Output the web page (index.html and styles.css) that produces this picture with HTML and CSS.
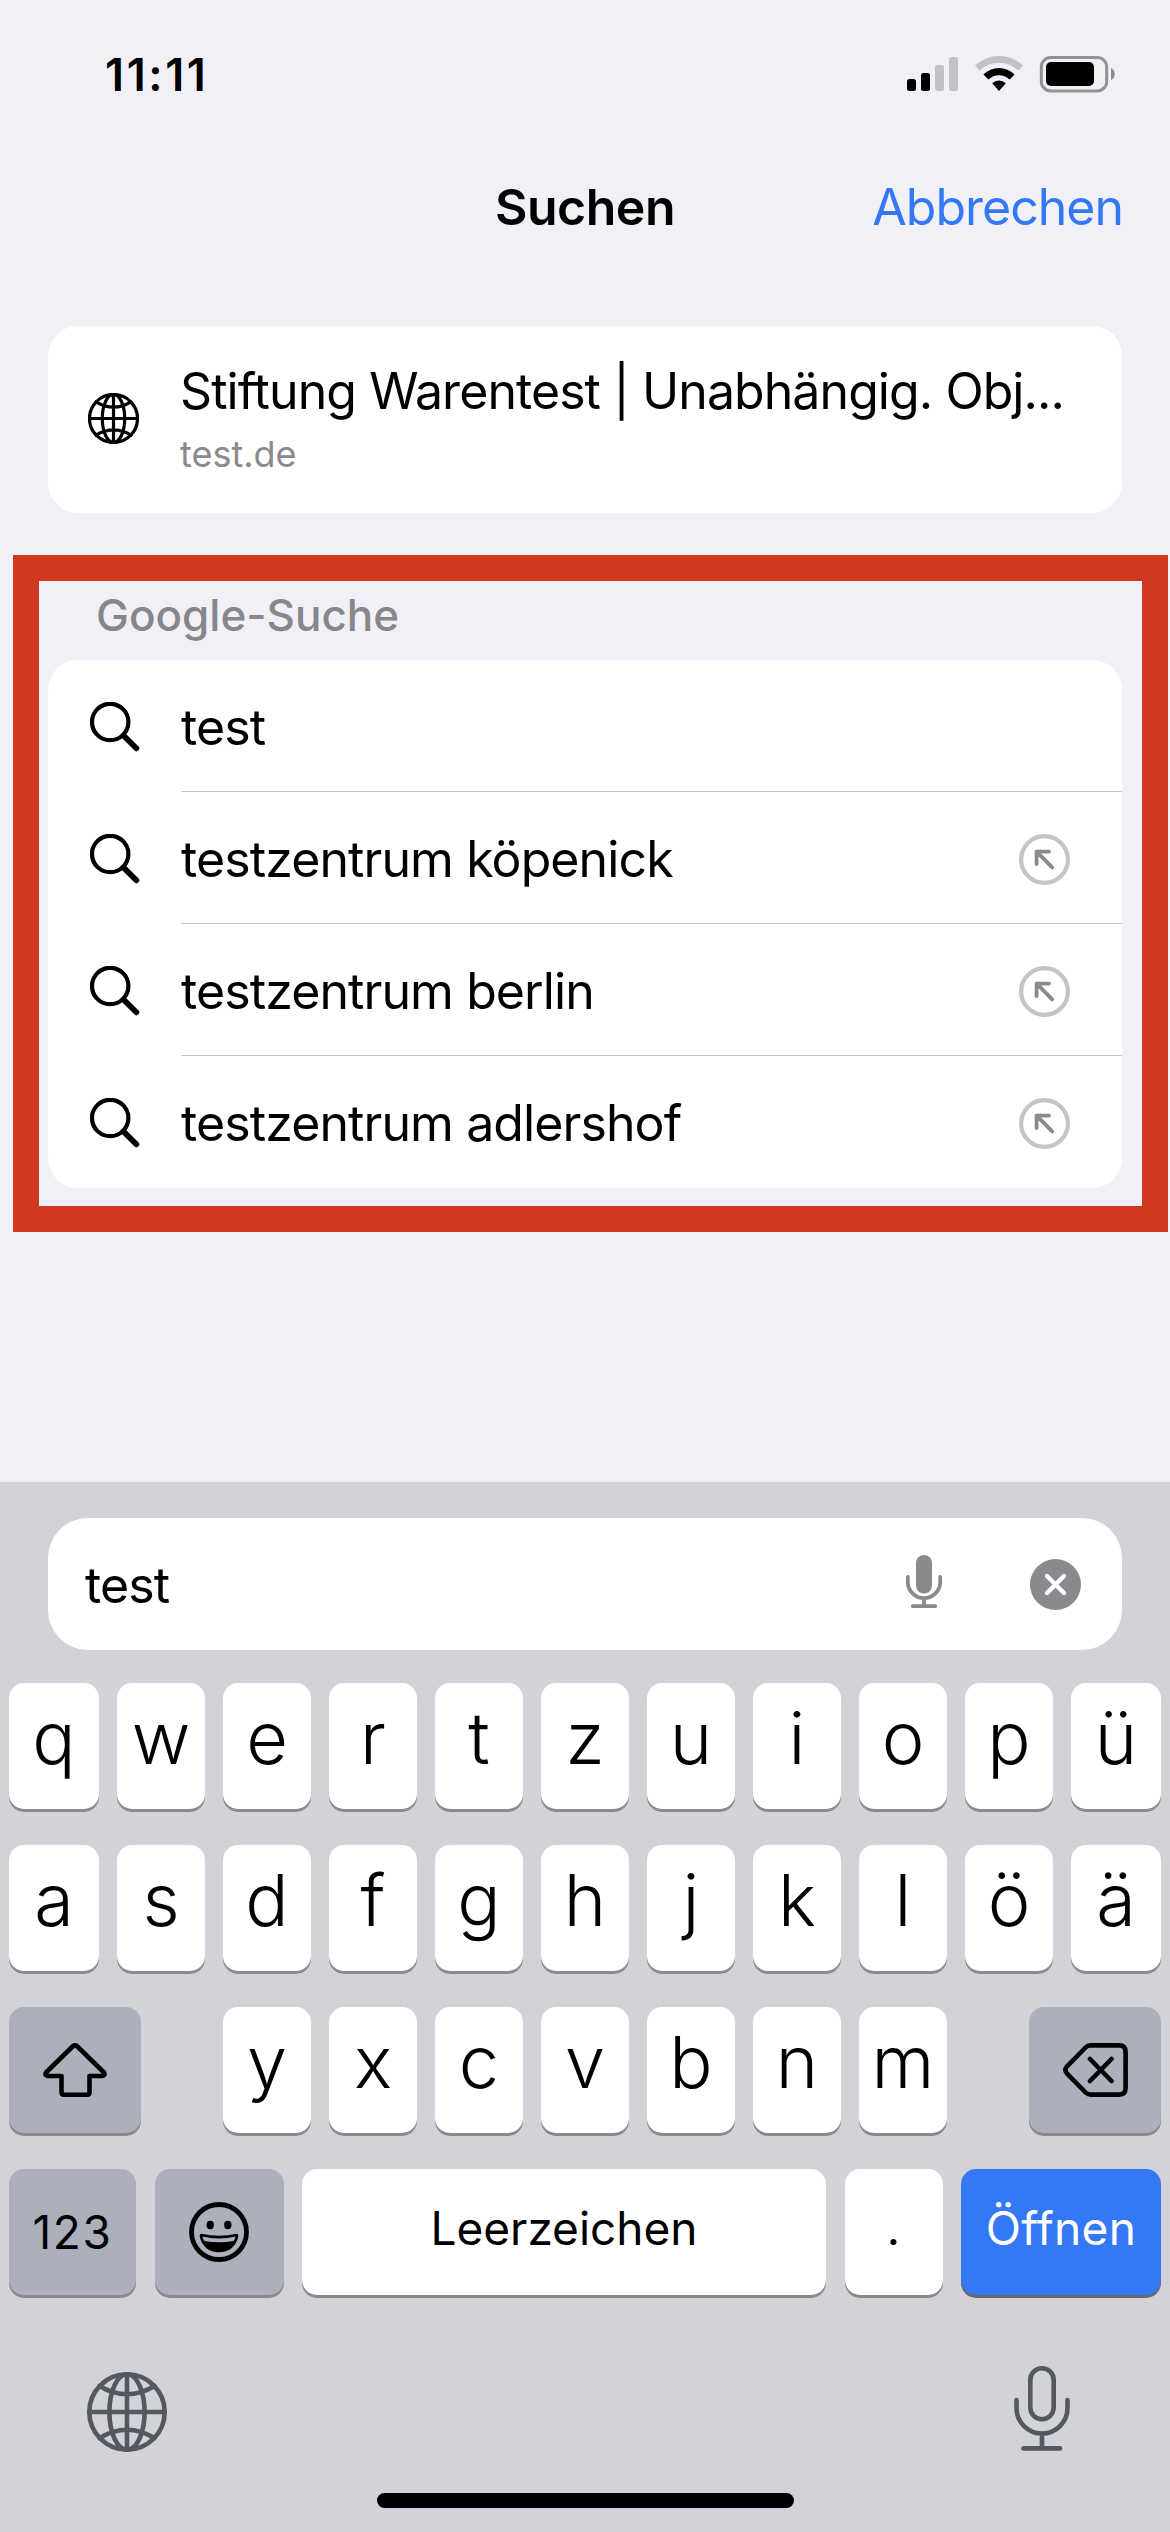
FILE: index.html
```html
<!DOCTYPE html>
<html lang="de">
<head>
<meta charset="utf-8">
<title>Suchen</title>
<link rel="stylesheet" href="styles.css">
</head>
<body>
<svg class="sprite" aria-hidden="true">
  <symbol id="globe" viewBox="0 0 80 80">
    <circle cx="40" cy="40" r="37.7"/>
    <ellipse cx="40" cy="40" rx="17.6" ry="37.7"/>
    <path d="M40 2.3V77.7M2.3 40H77.7M12.5 14Q40 30.5 67.5 14M12.5 66Q40 49.5 67.5 66"/>
  </symbol>
  <symbol id="search" viewBox="0 0 50 50">
    <circle cx="20.2" cy="20" r="18.2"/>
    <path class="handle" d="M33.5 33.5L46.3 46.3"/>
  </symbol>
  <symbol id="fill-in" viewBox="0 0 51 51">
    <circle class="ring" cx="25.5" cy="25.5" r="23.4"/>
    <path class="arrow" d="M17.6 30V17.6H30M17.6 17.6L33.2 33.4"/>
  </symbol>
</svg>
<div class="screen">
  <header class="status">
    <time class="clock">11:11</time>
    <svg class="indicators" viewBox="0 0 210 40">
      <g class="ink"><rect x="1" y="24" width="9" height="12" rx="2.5"/><rect x="15" y="18" width="9" height="18" rx="2.5"/></g>
      <g class="faint"><rect x="29" y="10" width="9" height="26" rx="2.5"/><rect x="43" y="2" width="9" height="34" rx="2.5"/></g>
      <path class="faint" d="M69 10.5A35 35 0 0 1 117 10.5L112.4 15.6A28 28 0 0 0 73.6 15.6Z"/>
      <path class="ink" d="M77.4 19.4A22.5 22.5 0 0 1 108.6 19.4L103.6 24.6A15.3 15.3 0 0 0 82.4 24.6Z"/>
      <path class="ink" d="M86.2 28.2A10 10 0 0 1 99.8 28.2L93 36Z"/>
      <rect class="case" x="135.3" y="2.5" width="65.4" height="33.4" rx="9.5"/>
      <rect class="ink" x="140" y="7" width="48" height="24" rx="5"/>
      <path class="nub" d="M205 13V25C210 23 210 15 205 13Z"/>
    </svg>
  </header>
  <nav class="titlebar">
    <h1 class="title">Suchen</h1>
    <a class="cancel">Abbrechen</a>
  </nav>
  <article class="card hit">
    <svg class="hit-icon"><use href="#globe"/></svg>
    <div class="hit-text">
      <div class="hit-title">Stiftung Warentest | Unabhängig. Obj...</div>
      <div class="hit-url">test.de</div>
    </div>
  </article>
  <section class="highlight">
    <h2 class="label">Google-Suche</h2>
    <ul class="card list">
      <li class="row"><svg class="lens"><use href="#search"/></svg><div class="cell"><span>test</span></div></li>
      <li class="row"><svg class="lens"><use href="#search"/></svg><div class="cell"><span>testzentrum köpenick</span><svg class="fill"><use href="#fill-in"/></svg></div></li>
      <li class="row"><svg class="lens"><use href="#search"/></svg><div class="cell"><span>testzentrum berlin</span><svg class="fill"><use href="#fill-in"/></svg></div></li>
      <li class="row"><svg class="lens"><use href="#search"/></svg><div class="cell"><span>testzentrum adlershof</span><svg class="fill"><use href="#fill-in"/></svg></div></li>
    </ul>
  </section>
  <footer class="panel">
    <div class="field">
      <span class="query">test</span>
      <svg class="field-mic" viewBox="0 0 38 54">
        <rect class="solid" x="11" y="0" width="16" height="38.5" rx="8"/>
        <path d="M2.8 22V27A16.2 16.2 0 0 0 35.2 27V22M19 43.5V51M7.8 51.2H30.2"/>
      </svg>
      <svg class="clear" viewBox="0 0 51 51"><circle cx="25.5" cy="25.5" r="25.5"/><path d="M17 17L34 34M34 17L17 34"/></svg>
    </div>
    <div class="keyboard">
      <div class="letters"><b class="key">q</b><b class="key">w</b><b class="key">e</b><b class="key">r</b><b class="key">t</b><b class="key">z</b><b class="key">u</b><b class="key">i</b><b class="key">o</b><b class="key">p</b><b class="key">ü</b></div>
      <div class="letters"><b class="key">a</b><b class="key">s</b><b class="key">d</b><b class="key">f</b><b class="key">g</b><b class="key">h</b><b class="key">j</b><b class="key">k</b><b class="key">l</b><b class="key">ö</b><b class="key">ä</b></div>
      <div class="third">
        <b class="key mod"><svg class="shift" viewBox="0 0 64 54"><path d="M29.6 3.5Q32 1.2 34.4 3.5L61 29.5Q62.6 32.4 59.4 33H46.5V49.2Q46.5 51.8 43.9 51.8H21.1Q18.5 51.8 18.5 49.2V33H4.6Q1.4 32.4 3 29.5Z"/></svg></b>
        <b class="key first">y</b><b class="key">x</b><b class="key">c</b><b class="key">v</b><b class="key">b</b><b class="key">n</b><b class="key">m</b>
        <b class="key mod last"><svg class="delete" viewBox="0 0 65 54"><path d="M27.5 2.4H56Q62.6 2.4 62.6 9V45Q62.6 51.6 56 51.6H27.5Q24.6 51.6 22.6 49.5L3.8 30.3Q1 27 3.8 23.7L22.6 4.5Q24.6 2.4 27.5 2.4ZM27 16L48.5 38M48.5 16L27 38"/></svg></b>
      </div>
      <div class="bottom-row">
        <b class="key mod num">123</b>
        <b class="key mod"><svg class="emoji" viewBox="0 0 60 60"><circle class="face" cx="30" cy="30" r="27.5"/><ellipse cx="21.2" cy="23" rx="3.7" ry="4.2"/><ellipse cx="38.8" cy="23" rx="3.7" ry="4.2"/><path fill-rule="evenodd" d="M12.5 31.8Q30 35.5 47.5 31.8Q49.5 31.8 49.3 34.2C47.5 44.5 39.5 50.3 30 50.3S12.5 44.5 10.7 34.2Q10.5 31.8 12.5 31.8ZM13.4 34.6Q14 37 15.4 39Q30 41.5 44.6 39Q46 37 46.6 34.6Q30 38.6 13.4 34.6Z"/></svg></b>
        <b class="key word">Leerzeichen</b>
        <b class="key word">.</b>
        <b class="key word go">Öffnen</b>
      </div>
    </div>
    <div class="tools">
      <svg class="lang"><use href="#globe"/></svg>
      <svg class="dictate" viewBox="0 0 56 86"><rect x="16.3" y="2.3" width="23.4" height="51" rx="11.7"/><path d="M2.5 34V42A25.5 25.5 0 0 0 53.5 42V34M28 68V82M9.5 82.4H46"/></svg>
    </div>
    <div class="home"></div>
  </footer>
</div>
</body>
</html>
```
FILE: styles.css
```css
* { box-sizing: border-box; }
body {
  margin: 0;
  background: #f1f0f6;
  color: #000;
  font-family: Inter, "Liberation Sans", sans-serif;
  font-size: 50px;
}
h1, h2, ul { margin: 0; padding: 0; list-style: none; }
svg { display: block; flex: none; fill: none; stroke-linecap: round; stroke-linejoin: round; }
.sprite { position: absolute; width: 0; height: 0; }
.screen { display: flex; flex-direction: column; width: 1170px; height: 2532px; overflow: hidden; }

.status { display: flex; align-items: center; justify-content: space-between; height: 149px; padding: 0 50px 0 105px; }
.clock { font-size: 45px; font-weight: 600; letter-spacing: 2.6px; }
.indicators { width: 210px; height: 40px; margin-right: 4px; }
.ink { fill: #000; }
.faint { fill: #c2c1c6; }
.case { stroke: #929196; stroke-width: 3; }
.nub { fill: #8b8a8f; }

.titlebar { display: grid; grid-template-columns: 1fr auto 1fr; align-items: center; height: 115px; padding: 0 47px; }
.title { grid-column: 2; font-size: 50px; font-weight: 600; letter-spacing: -0.5px; }
.cancel { justify-self: end; color: #3478f6; letter-spacing: -1px; }

.card { width: 1074px; background: #fff; border-radius: 30px; }
.hit { display: flex; gap: 41px; height: 187px; margin: 62px 48px 0; padding: 0 40px 2px; align-items: center; }
.hit-icon { width: 51px; height: 51px; stroke: #000; stroke-width: 5; }
.hit-text { display: flex; flex-direction: column; gap: 11px; white-space: nowrap; }
.hit-title { line-height: 60px; letter-spacing: -0.93px; }
.hit-url { font-size: 36px; line-height: 44px; color: #8a8a8e; }

.highlight { width: 1155px; height: 677px; margin: 42px 0 0 13px; border: 26px solid #d03820; padding-left: 9px; }
.label { margin: 0 0 11px 48px; font-size: 44px; font-weight: 500; line-height: 68px; color: #86868b; }
.list { overflow: hidden; letter-spacing: -0.9px; }
.row { display: flex; align-items: center; gap: 41px; height: 132px; padding-left: 42px; }
.lens { width: 50px; height: 50px; margin-top: 1px; stroke: #000; stroke-width: 4.2; }
.handle { stroke-width: 5.8; }
.cell { display: flex; flex: 1; align-items: center; justify-content: space-between; height: 132px; padding: 3px 52px 0 0; border-bottom: 1px solid #c5c5c7; }
.row:last-child .cell { border-bottom-color: transparent; }
.fill { width: 51px; height: 51px; }
.ring { stroke: #c4c4c6; stroke-width: 4.2; }
.arrow { stroke: #8a8a8e; stroke-width: 3.8; }

.panel { display: flex; flex-direction: column; height: 1050px; margin-top: auto; padding-top: 36px; background: #d1d3d9; flex: none; }
.field { display: flex; align-items: center; height: 132px; margin: 0 48px; padding: 0 41px 0 37px; border-radius: 40px; background: #fff; }
.query { flex: 1; padding-top: 2px; letter-spacing: -0.9px; }
.field-mic { width: 38px; height: 54px; margin-right: 87px; margin-top: -4px; stroke: #8a8a8e; stroke-width: 3.8; }
.solid { fill: #8a8a8e; stroke: none; }
.clear { width: 51px; height: 51px; fill: #8a8a8e; }
.clear path { stroke: #fff; stroke-width: 4.4; }

.keyboard { display: flex; flex-direction: column; gap: 36px; padding: 33px 9px 0; }
.letters { display: grid; grid-template-columns: 90px repeat(9, 88px) 90px; column-gap: 18px; }
.key {
  display: flex; align-items: center; justify-content: center;
  height: 126px; padding-bottom: 17px; border-radius: 15px;
  background: #fff; box-shadow: 0 3px 0 #898a8d;
  font-size: 72px; font-weight: 350;
}
.third { display: flex; gap: 18px; }
.third .key { width: 88px; }
.third .mod { width: 132px; }
.third .first, .third .last { margin-left: 64px; }
.mod { background: #abb0bc; padding-bottom: 0; }
.num { font-size: 46px; font-weight: 400; letter-spacing: 1.6px; }
.word { font-size: 46px; font-weight: 400; padding-bottom: 8px; }
.go { background: #3478f6; color: #fff; box-shadow: 0 3px 0 #68696c; letter-spacing: 0.3px; }
.bottom-row { display: grid; grid-template-columns: 127px 129px 524px 98px 200px; justify-content: space-between; }
.shift { width: 64px; height: 54px; stroke: #000; stroke-width: 4.6; }
.delete { width: 65px; height: 54px; stroke: #000; stroke-width: 4.6; }
.emoji { width: 60px; height: 60px; fill: #000; }
.face { fill: none; stroke: #000; stroke-width: 4.8; }

.tools { display: flex; justify-content: space-between; align-items: flex-start; margin-top: 71px; padding: 0 100px 0 87px; stroke: #55585e; }
.lang { width: 80px; height: 80px; margin-top: 6px; stroke-width: 4.6; }
.dictate { width: 56px; height: 86px; stroke-width: 4.6; }
.home { width: 417px; height: 15px; margin: 41px 0 0 377px; border-radius: 8px; background: #000; }
```
